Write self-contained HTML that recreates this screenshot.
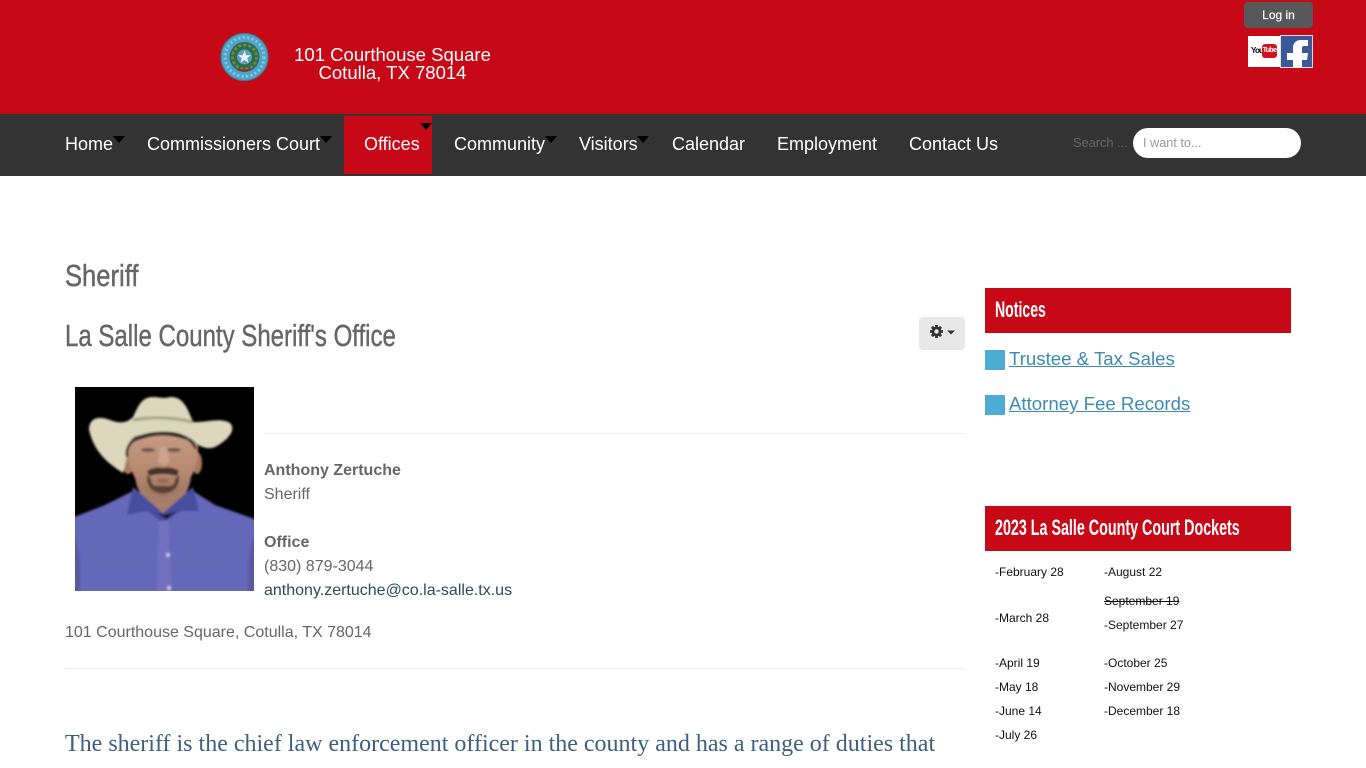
<!DOCTYPE html>
<html><head><meta charset="utf-8"><title>Sheriff</title>
<style>
html,body{margin:0;padding:0;background:#fff;width:1366px;height:768px;overflow:hidden;font-family:"Liberation Sans",sans-serif;color:#666}
.a{position:absolute;white-space:nowrap}
.n{font-size:18px;line-height:24px;color:#fff;top:132px}
.t{width:0;height:0;border-left:6px solid transparent;border-right:6px solid transparent;border-top:7px solid #000;position:absolute;top:136px}
.h{transform-origin:0 0;font-weight:400;color:#666;-webkit-text-stroke:.45px #666}
.w{transform-origin:0 0;color:#fff}
.d{font-size:12px;line-height:16px;color:#111}
.i{font-size:16px;line-height:24px;left:264px}
</style></head><body>
<div class="a" style="left:0;top:0;width:1366px;height:114px;background:#c70816"></div>
<svg class="a" style="left:220px;top:32px" width="50" height="50" viewBox="0 0 50 50">
<circle cx="24.500" cy="25" r="24" fill="#4fa5c9"/><circle cx="24.500" cy="25" r="23.500" fill="none" stroke="#2f7f9f"/>
<circle cx="24.500" cy="25" r="19.500" fill="none" stroke="#8cc4da" stroke-width="3" stroke-dasharray="2 2.500"/>
<circle cx="24.500" cy="25" r="15" fill="#33685f"/><circle cx="24.500" cy="25" r="12" fill="#2a6d4a" stroke="#7a8a30" stroke-width="2.500" stroke-dasharray="3 2"/>
<circle cx="24.500" cy="25" r="7.500" fill="#5e9fc0"/><polygon points="24.500,18.500 26.200,23.200 31,23.200 27.200,26 28.500,30.700 24.500,28 20.500,30.700 21.800,26 18,23.200 22.800,23.200" fill="#eef6fa"/>
<path d="M18 37q6.500 3 13 0" stroke="#9c2b2b" stroke-width="2" fill="none"/>
</svg>
<div class="a" style="left:294px;top:46px;font-size:18.55px;line-height:18px;color:#fff;text-align:center;width:197px">101 Courthouse Square<br>Cotulla, TX 78014</div>
<div class="a" style="left:1244px;top:2px;width:69px;height:26px;background:#58585a;border-radius:4px;color:#fff;font-size:12px;line-height:27px;text-align:center;-webkit-text-stroke:.2px #fff">Log in</div>
<div class="a" style="left:1248px;top:36px;width:33px;height:31px;background:#fff"></div>
<div class="a" style="left:1251px;top:46px;font:bold 8px/10px 'Liberation Sans',sans-serif;color:#111;letter-spacing:-.8px">You</div>
<div class="a" style="left:1262px;top:44px;width:15px;height:14px;background:#d3121f;border-radius:3px;color:#fff;font:bold 7px/14px 'Liberation Sans',sans-serif;letter-spacing:-.6px;text-align:center">Tube</div>
<svg class="a" style="left:1280px;top:35px" width="33" height="33" viewBox="0 0 33 33"><rect x=".5" y=".5" width="32" height="32" fill="#3b5998" stroke="#e8dfe4"/><path d="M13 33V25H7V18H13V13C13 8 16 5 21 5H28V11H24C22.500 11 22 12 22 13V18H28L27 25H22V33Z" fill="#fff"/></svg>

<div class="a" style="left:0;top:114px;width:1366px;height:62px;background:#333"></div>
<div class="a" style="left:344px;top:116px;width:88px;height:58px;background:#c70816"></div>
<div class="a n" style="left:65px">Home</div><div class="t" style="left:113px"></div>
<div class="a n" style="left:147px">Commissioners Court</div><div class="t" style="left:320px"></div>
<div class="a n" style="left:364px">Offices</div><div class="t" style="left:420px;top:123px"></div>
<div class="a n" style="left:454px">Community</div><div class="t" style="left:545px"></div>
<div class="a n" style="left:579px">Visitors</div><div class="t" style="left:637px"></div>
<div class="a n" style="left:672px">Calendar</div>
<div class="a n" style="left:777px">Employment</div>
<div class="a n" style="left:909px">Contact Us</div>
<div class="a" style="left:1073px;top:135px;font-size:12.8px;line-height:16px;color:#666">Search ...</div>
<div class="a" style="left:1133px;top:128px;width:168px;height:30px;background:#fff;border-radius:15px;box-sizing:border-box;padding-left:10px;font-size:12.7px;line-height:30px;color:#999">I want to...</div>

<div class="a h" style="left:65px;top:258px;font-size:31px;line-height:36px;transform:scaleX(.825)">Sheriff</div>
<div class="a h" style="left:65px;top:318px;font-size:31px;line-height:36px;transform:scaleX(.775)">La Salle County Sheriff's Office</div>
<div class="a" style="left:919px;top:317px;width:46px;height:33px;background:#e8e8e8;border-radius:4px"></div>
<svg class="a" style="left:929px;top:324px" width="28" height="16" viewBox="0 0 28 16"><g fill="#333"><circle cx="7.500" cy="7.500" r="4.800"/><g stroke="#333" stroke-width="2.800"><path d="M7.500 1v13M1 7.500h13M2.900 2.900l9.200 9.200M12.100 2.900l-9.200 9.200"/></g><polygon points="18,6.500 26,6.500 22,10.500"/></g><circle cx="7.500" cy="7.500" r="2.200" fill="#e8e8e8"/></svg>

<svg class="a" style="left:75px;top:387px" width="179" height="204" viewBox="0 0 179 204">
<defs><filter id="b" x="-10%" y="-10%" width="120%" height="120%"><feGaussianBlur stdDeviation="1"/></filter>
<pattern id="p" width="3" height="3" patternUnits="userSpaceOnUse"><rect width="3" height="3" fill="#6163b6"/><circle cx="1" cy="1" r=".7" fill="#787ac8"/></pattern>
<linearGradient id="f" x1="0" y1="0" x2="0" y2="1"><stop offset="0" stop-color="#c49a82"/><stop offset=".6" stop-color="#b58a70"/><stop offset="1" stop-color="#9c7560"/></linearGradient></defs>
<rect width="179" height="204" fill="#000"/>
<g filter="url(#b)">
<path d="M-6 132 30 118 58 104 88 126 118 104 140 118 185 134V212H-6Z" fill="url(#p)"/>
<path d="M0 150Q8 175 4 212H-6V140ZM179 150Q170 175 174 212H185V140Z" fill="#50528f" opacity=".6"/>
<path d="M60 90Q62 112 88 128 114 112 116 90Z" fill="#a67e6a"/>
<path d="M58 100 52 128 72 124 88 136 106 124 124 124 118 100 88 126Z" fill="#4a4d9e"/>
<path d="M88 130 78 124Q88 131 102 124L92 132Z" fill="#15151f"/>
<path d="M84 134 81 212H97L93 134Z" fill="#7271c0"/>
<circle cx="93" cy="168" r="2" fill="#c8c8e0"/><circle cx="94" cy="201" r="2" fill="#c8c8e0"/>
<ellipse cx="53" cy="76" rx="6" ry="11" fill="#a97a63"/><ellipse cx="122" cy="76" rx="5" ry="11" fill="#a97a63"/>
<path d="M52 58C52 80 62 100 74 106Q88 113 102 106C114 98 124 80 123 58Q88 38 52 58Z" fill="url(#f)"/>
<path d="M72 84Q80 79 88 81 96 79 104 84L102 89Q88 85 74 89Z" fill="#47322a"/>
<path d="M72 88Q71 97 77 103 88 110 99 103 105 97 104 88L100 92Q100 99 94 99H82Q76 99 76 92Z" fill="#594236"/>
<path d="M82 92Q88 90 94 92L93 96H83Z" fill="#9b6a58"/>
<ellipse cx="73" cy="63" rx="7" ry="2" fill="#6e5548"/><ellipse cx="99" cy="63" rx="7" ry="2" fill="#6e5548"/>
<path d="M85 60Q84 72 82 75L90 78 95 74Q92 66 92 60Z" fill="#cca48e"/>
<path d="M14 43C14 32 22 28 35 33 45 37 52 36 58 30 63 20 66 10 78 10 85 10 88 12 95 10 108 9 113 22 118 35 130 36 145 30 155 36 161 42 155 52 140 60 132 63 124 60 116 52 100 44 75 44 60 50 53 55 50 62 52 70 50 78 49 82 48 86 36 78 20 68 14 43Z" fill="#dcd7bd"/>
<path d="M52 70C50 56 62 47 85 46 104 45 116 50 121 62" fill="none" stroke="#231d18" stroke-width="2.500"/>
<path d="M58 33q30-5 60 2" fill="none" stroke="#a8a388" stroke-width="3"/>
</g></svg>

<div class="a" style="left:264px;top:433px;width:701px;height:1px;background:#eee"></div>
<div class="a i" style="top:459px;font-weight:bold">Anthony Zertuche</div>
<div class="a i" style="top:483px">Sheriff</div>
<div class="a i" style="top:531px;font-weight:bold">Office</div>
<div class="a i" style="top:555px">(830) 879-3044</div>
<div class="a i" style="top:579px;color:#2f4a5c">anthony.zertuche@co.la-salle.tx.us</div>
<div class="a" style="left:65px;top:621px;font-size:16px;line-height:24px">101 Courthouse Square, Cotulla, TX 78014</div>
<div class="a" style="left:65px;top:668px;width:900px;height:1px;background:#eee"></div>
<div class="a" style="left:65px;top:729px;font:24px/30px 'Liberation Serif',serif;color:#3d5f80">The sheriff is the chief law enforcement officer in the county and has a range of duties that</div>

<div class="a" style="left:985px;top:288px;width:306px;height:45px;background:#c70816"></div>
<div class="a w" style="left:995px;top:297px;font-size:22px;line-height:26px;transform:scaleX(.64);font-weight:bold">Notices</div>
<div class="a" style="left:985px;top:350px;width:20px;height:20px;background:#4dacd4"></div>
<div class="a" style="left:1009px;top:346px;font-size:18.65px;line-height:25px;color:#3a8cb2;text-decoration:underline">Trustee &amp; Tax Sales</div>
<div class="a" style="left:985px;top:395px;width:20px;height:20px;background:#4dacd4"></div>
<div class="a" style="left:1009px;top:391px;font-size:18.65px;line-height:25px;color:#3a8cb2;text-decoration:underline">Attorney Fee Records</div>

<div class="a" style="left:985px;top:506px;width:306px;height:45px;background:#c70816"></div>
<div class="a w" style="left:995px;top:515px;font-size:22px;line-height:26px;transform:scaleX(.65);font-weight:bold">2023 La Salle County Court Dockets</div>
<div class="a d" style="left:995px;top:564px">-February 28</div>
<div class="a d" style="left:995px;top:610px">-March 28</div>
<div class="a d" style="left:995px;top:655px">-April 19</div>
<div class="a d" style="left:995px;top:679px">-May 18</div>
<div class="a d" style="left:995px;top:703px">-June 14</div>
<div class="a d" style="left:995px;top:727px">-July 26</div>
<div class="a d" style="left:1104px;top:564px">-August 22</div>
<div class="a d" style="left:1104px;top:593px;text-decoration:line-through">September 19</div>
<div class="a d" style="left:1104px;top:617px">-September 27</div>
<div class="a d" style="left:1104px;top:655px">-October 25</div>
<div class="a d" style="left:1104px;top:679px">-November 29</div>
<div class="a d" style="left:1104px;top:703px">-December 18</div>
</body></html>
